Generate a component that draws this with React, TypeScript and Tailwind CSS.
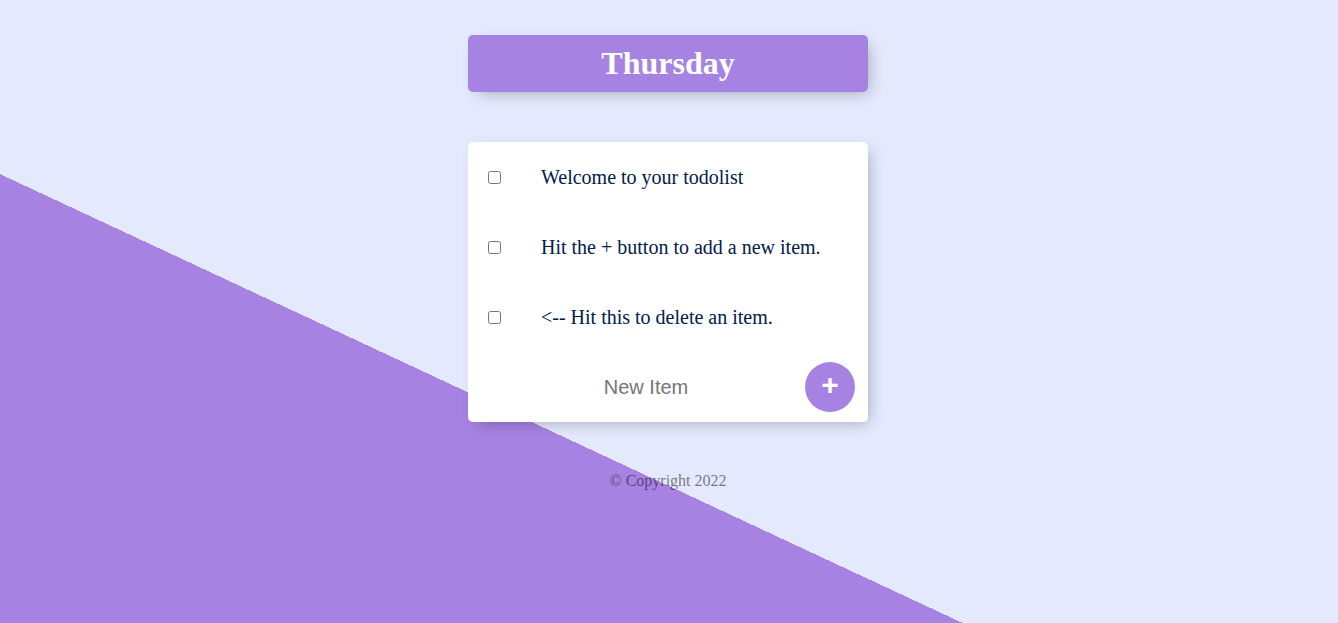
const ITEMS = [
  "Welcome to your todolist",
  "Hit the + button to add a new item.",
  "<-- Hit this to delete an item.",
];

export default function App() {
  return (
    <div className="min-h-[623px] w-full bg-[#E4E9FD] bg-[linear-gradient(25deg,#A683E3_36%,#E4E9FD_36%)] pr-[2px] pt-[35px] font-['Liberation_Serif',serif]">
      <div className="mx-auto w-[400px] rounded-[5px] bg-[#A683E3] shadow-[5px_5px_15px_-5px_rgba(0,0,0,0.3)]">
        <h1 className="p-[10px] text-center text-[32px] font-bold leading-[37px] text-white">Thursday</h1>
      </div>

      <div className="mx-auto mt-[50px] w-[400px] rounded-[5px] bg-white shadow-[5px_5px_15px_-5px_rgba(0,0,0,0.3)]">
        {ITEMS.map((text) => (
          <TodoItem key={text} text={text} />
        ))}
        <form className="flex h-[70px] items-center" onSubmit={(e) => e.preventDefault()}>
          <input
            type="text"
            placeholder="New Item"
            className="ml-[20px] h-[60px] w-[316px] bg-transparent text-center font-['Liberation_Sans',Arial,sans-serif] text-[20px] text-[#00204a] outline-none placeholder:text-[#757575]"
          />
          <button
            type="submit"
            className="ml-px grid h-[50px] w-[50px] place-items-center rounded-full bg-[#A683E3] pb-[4px] font-['Liberation_Sans',Arial,sans-serif] text-[30px] font-bold leading-none text-white"
          >
            +
          </button>
        </form>
      </div>

      <footer className="mt-[50px] text-center text-[16px] leading-[18px] text-black/50">© Copyright 2022</footer>
    </div>
  );
}

function TodoItem({ text }: { text: string }) {
  return (
    <div className="flex h-[70px] items-center">
      <input type="checkbox" className="m-[20px] h-[13px] w-[13px] shrink-0" />
      <p className="p-[20px] text-[20px] leading-[23px] text-[#00204a]">{text}</p>
    </div>
  );
}
